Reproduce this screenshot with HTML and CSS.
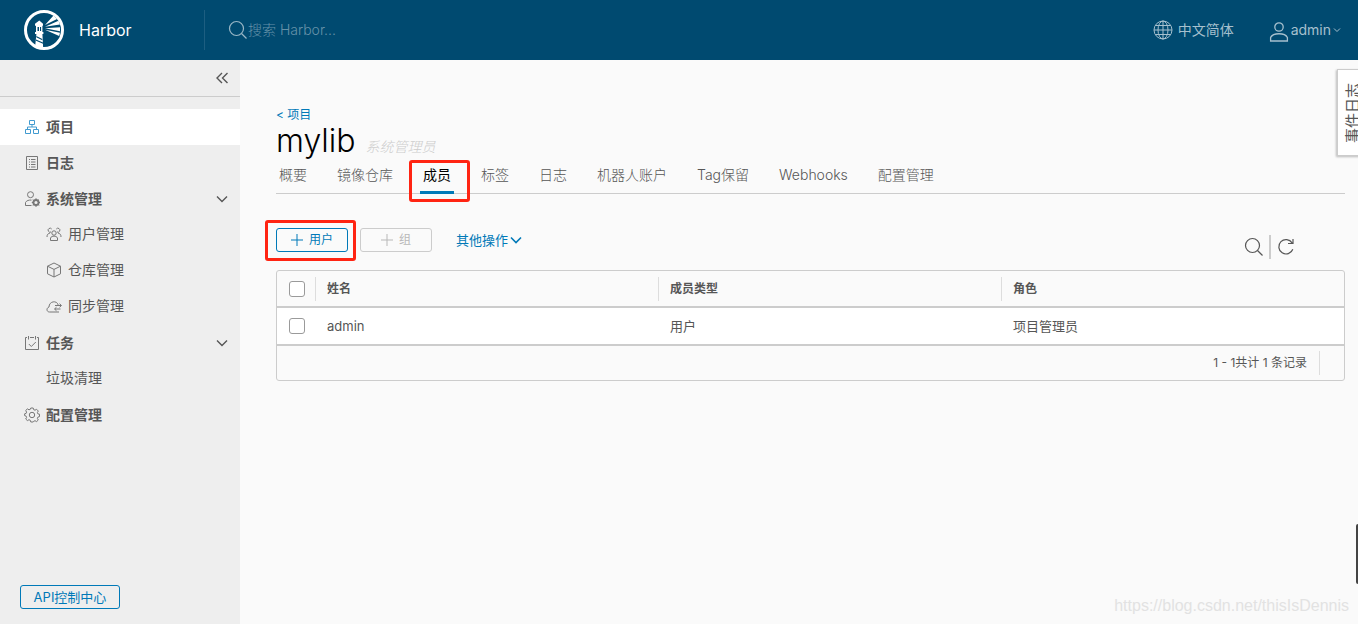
FILE: index.html
```html
<!DOCTYPE html>
<html lang="zh-CN">
<head>
<meta charset="utf-8">
<title>Harbor</title>
<link rel="stylesheet" href="styles.css">
</head>
<body>
<header class="header">
  <a class="brand" href="#">
    <svg class="logo" viewBox="0 0 40 40" aria-hidden="true">
      <circle cx="20" cy="20" r="18.500" fill="none" stroke="#fff" stroke-width="3"/>
      <path fill="#fff" d="M15.300 10.500l3.700 3.300v2h-.6V22h1v2h-1l.8 14.500c-3 .3-6-.7-8-2.500L12.400 24h-1.400v-2h1v-6.200h-1v-2z"/>
      <path fill="#004a70" d="M13.500 17h3.600v4h-3.600zM12.300 26l6 3v1.300l-6-3zM12 29.500l7 3v1.300l-7-3z"/>
      <path fill="#fff" d="M15 17h1v4h-1zM21 15l8.500-9.500 3.500 3.500zM21 16.800l13.500-6 1.500 3.700zM21 18.300l15-1v4zM21 19.800l15 3-.8 3.200z"/>
    </svg>
    <span>Harbor</span>
  </a>
  <label class="search">
    <svg viewBox="0 0 20 20" aria-hidden="true"><circle cx="8.500" cy="8.500" r="7"/><path d="M13.500 13.500l5 5"/></svg>
    <input type="search" placeholder="搜索 Harbor..." aria-label="搜索 Harbor">
  </label>
  <div class="header-actions">
    <button class="header-button" type="button">
      <svg class="globe" viewBox="0 0 20 20" aria-hidden="true"><circle cx="10" cy="10" r="9"/><ellipse cx="10" cy="10" rx="5" ry="9"/><path d="M10 1v18M1 10h18M2.500 5.500h15M2.500 14.500h15"/></svg>
      <span>中文简体</span>
    </button>
    <button class="header-button user" type="button">
      <svg class="person" viewBox="0 0 20 20" aria-hidden="true"><circle cx="10" cy="5" r="4.200"/><path d="M1.600 19v-3.500c2.500-5 14.300-5 16.800 0V19z"/></svg>
      <span>admin</span>
      <svg class="caret" viewBox="0 0 8 8" aria-hidden="true"><path d="M1 2.500l3 3 3-3"/></svg>
    </button>
  </div>
</header>
<div class="layout">
  <nav class="sidebar">
    <div class="collapse-row">
      <button class="collapse" type="button" aria-label="收起"><svg viewBox="0 0 14 14" aria-hidden="true"><path d="M7 2L2 7l5 5M12.500 2l-5 5 5 5"/></svg></button>
    </div>
    <ul class="menu">
      <li><a class="item active" href="#"><svg viewBox="0 0 16 16" aria-hidden="true"><path d="M5.500 1.500h5v4h-5zM1.500 10.500h5v4h-5zM9.500 10.500h5v4h-5zM8 5.500V8M3.500 10.500V8h9v2.500"/></svg><span>项目</span></a></li>
      <li><a class="item" href="#"><svg viewBox="0 0 16 16" aria-hidden="true"><path d="M2.500 1.500h11v13h-11zM5 4.500h1M7 4.500h4.500M5 7h1M7 7h4.500M5 9.500h1M7 9.500h4.500M5 12h1M7 12h4.500"/></svg><span>日志</span></a></li>
      <li><a class="item" href="#"><svg viewBox="0 0 16 16" aria-hidden="true"><circle cx="6.500" cy="3.700" r="3"/><path d="M7.500 14.500h-6v-3c1-2 3.500-2.700 6-2.400"/><circle cx="12" cy="11.500" r="2.600" stroke-width="2"/><path d="M12 7.200v2M12 14v2M7.800 11.500h2M14.200 11.500h2M9 8.500l1.400 1.400M15 8.500l-1.400 1.400M9 14.500l1.400-1.400M15 14.500l-1.400-1.400"/></svg><span>系统管理</span><svg class="chevron" viewBox="0 0 14 14" aria-hidden="true"><path d="M2 4.500l5 5 5-5"/></svg></a></li>
      <li><a class="item sub" href="#"><svg viewBox="0 0 16 16" aria-hidden="true"><circle cx="8" cy="7" r="2.200"/><path d="M4.500 14.500V12c1-2.500 6-2.500 7 0v2.500zM5 6a2 2 0 1 1 .7-3M11 6a2 2 0 1 0-.7-3M1 11c0-2.500 1-3.500 3-4M15 11c0-2.500-1-3.500-3-4"/></svg><span>用户管理</span></a></li>
      <li><a class="item sub" href="#"><svg viewBox="0 0 16 16" aria-hidden="true"><path d="M8 1l6.500 3.200v7.600L8 15l-6.500-3.200V4.200zM1.500 4.200L8 7.400l6.500-3.200M8 7.400V15"/></svg><span>仓库管理</span></a></li>
      <li><a class="item sub" href="#"><svg viewBox="0 0 16 16" aria-hidden="true"><path d="M13 14H3.500C.5 14 0 10 3 9c0-6 8-7 9.200-2M9 7.500h6M13.500 5.700l2 1.800-2 1.800M14.500 11H8.800M10.500 9.200L8.500 11l2 1.800"/></svg><span>同步管理</span></a></li>
      <li><a class="item" href="#"><svg viewBox="0 0 16 16" aria-hidden="true"><path d="M3 2.500H1.500v12h13v-12H13M6 2.500h4M4.500 1v3.500M11.500 1v3.500M4.800 9l2.500 2.500 4.500-4.500"/></svg><span>任务</span><svg class="chevron" viewBox="0 0 14 14" aria-hidden="true"><path d="M2 4.500l5 5 5-5"/></svg></a></li>
      <li><a class="item sub" href="#"><span>垃圾清理</span></a></li>
      <li><a class="item" href="#"><svg viewBox="0 0 16 16" aria-hidden="true"><circle cx="8" cy="8" r="2.700"/><path d="M6.800 1h2.400l.5 1.700 1.300.5 1.600-.9 1.700 1.700-.9 1.600.5 1.300 1.600.3v2.400l-1.600.5-.5 1.300.9 1.600-1.700 1.600-1.600-.9-1.300.6L9.200 15H6.800l-.5-1.700-1.300-.6-1.600.9L1.700 12l.9-1.600-.5-1.300-1.500-.5V6.800l1.500-.4.5-1.300-.9-1.600 1.700-1.600 1.600.9 1.300-.5z"/></svg><span>配置管理</span></a></li>
    </ul>
    <a class="button api" href="#">API控制中心</a>
  </nav>
  <main class="content">
    <a class="crumb" href="#">&lt; 项目</a>
    <div class="title"><h1>mylib</h1><em>系统管理员</em></div>
    <nav class="tabs">
      <a href="#">概要</a>
      <a href="#">镜像仓库</a>
      <a class="current" href="#">成员</a>
      <a href="#">标签</a>
      <a href="#">日志</a>
      <a href="#">机器人账户</a>
      <a href="#">Tag保留</a>
      <a href="#">Webhooks</a>
      <a href="#">配置管理</a>
    </nav>
    <div class="toolbar">
      <div class="marked"><button class="button" type="button"><svg viewBox="0 0 12 12" aria-hidden="true"><path d="M6 0v12M0 6h12"/></svg>用户</button></div>
      <button class="button" type="button" disabled><svg viewBox="0 0 12 12" aria-hidden="true"><path d="M6 0v12M0 6h12"/></svg>组</button>
      <button class="more" type="button">其他操作<svg viewBox="0 0 12 12" aria-hidden="true"><path d="M1 3.500l5 5 5-5"/></svg></button>
      <div class="tools">
        <button type="button" aria-label="搜索"><svg viewBox="0 0 20 20" aria-hidden="true"><circle cx="8.500" cy="8.500" r="7"/><path d="M13.500 13.500l5 5"/></svg></button>
        <button type="button" aria-label="刷新"><svg viewBox="0 0 20 20" aria-hidden="true"><path d="M16.800 12.200a7.200 7.200 0 1 1-.7-6.300M12 6.500h5V2"/></svg></button>
      </div>
    </div>
    <div class="grid">
      <table>
        <thead>
          <tr><th class="check"><input type="checkbox" aria-label="全选"></th><th><div>姓名</div></th><th><div>成员类型</div></th><th><div>角色</div></th></tr>
        </thead>
        <tbody>
          <tr><td class="check"><input type="checkbox" aria-label="选择 admin"></td><td>admin</td><td>用户</td><td>项目管理员</td></tr>
        </tbody>
      </table>
      <div class="grid-footer"><span>1 - 1共计 1 条记录</span></div>
    </div>
  </main>
</div>
<button class="event-log" type="button">事件日志</button>
<div class="edge-handle"></div>
<div class="watermark">https://blog.csdn.net/thisIsDennis</div>
<script src="app.js"></script>
</body>
</html>
```

FILE: app.js
```js
document.querySelector('thead input').addEventListener('change', function (e) {
  document.querySelectorAll('tbody input').forEach(function (box) {
    box.checked = e.target.checked;
  });
});
```

FILE: styles.css
```css
* { box-sizing: border-box; }

body {
  display: flex;
  flex-direction: column;
  min-height: 100vh;
  margin: 0;
  overflow: hidden;
  background: #fafafa;
  color: #565656;
  font: 400 14px/24px Inter, "Noto Sans CJK SC", sans-serif;
}

a { color: inherit; text-decoration: none; }
button, input { font: inherit; color: inherit; }
button { padding: 0; border: 0; background: none; }
svg { flex: none; fill: none; stroke: currentColor; }

.header {
  display: flex;
  align-items: center;
  height: 60px;
  background: #004a70;
  color: #fff;
}
.brand {
  display: flex;
  align-items: center;
  gap: 15px;
  width: 205px;
  height: 40px;
  padding-left: 24px;
  border-right: 1px solid #1d5e81;
  font-size: 16px;
}
.logo { width: 40px; height: 40px; stroke: none; }
.search {
  display: flex;
  flex: 1;
  align-items: center;
  padding-left: 23px;
  color: #99b7c6;
}
.search svg { width: 20px; height: 20px; stroke-width: 1.2; }
.search input {
  width: 240px;
  padding: 0;
  border: 0;
  outline: 0;
  background: none;
  font-weight: 300;
}
.search input::placeholder { color: #6692a9; }
.header-actions { display: flex; gap: 35px; padding-right: 17px; }
.header-button {
  display: flex;
  align-items: center;
  gap: 5px;
  color: #a6c0ce;
}
.user { gap: 2px; }
.header-button .globe, .header-button .person { width: 20px; height: 20px; }
.person { margin-top: 3px; stroke-width: 1.3; }
.caret { width: 8px; height: 8px; }

.layout { display: flex; flex: 1; }
.sidebar {
  display: flex;
  flex: none;
  flex-direction: column;
  width: 240px;
  padding-bottom: 15px;
  background: #eee;
}
.collapse-row {
  display: flex;
  align-items: center;
  justify-content: flex-end;
  height: 37px;
  padding-right: 11px;
  border-bottom: 1px solid #ccc;
}
.collapse, .collapse svg { display: block; width: 14px; height: 14px; }
.collapse svg { stroke-width: 1.4; }
.menu { margin: 0; padding: 12px 0 0; list-style: none; }
.item {
  display: flex;
  align-items: center;
  gap: 6px;
  height: 36px;
  padding: 0 11px 0 24px;
  font-weight: 600;
}
.item svg { width: 16px; height: 16px; color: #777; }
.item .chevron { width: 14px; height: 14px; margin-left: auto; color: #565656; stroke-width: 1.4; }
.active { background: #fff; }
.item.active svg { color: #429bd0; }
.sub { padding-left: 46px; padding-bottom: 2px; font-weight: 400; }

.button {
  display: inline-flex;
  align-items: center;
  justify-content: center;
  gap: 6px;
  width: 72px;
  height: 24px;
  border: 1px solid #0079b8;
  border-radius: 3px;
  color: #0079b8;
  font-size: 12px;
  line-height: 22px;
}
.button svg { width: 12px; height: 12px; }
.button:disabled { border-color: #ccc; color: #b8b8b8; }
.api { width: 100px; margin: auto 0 0 20px; font-size: 13px; }

.content { flex: 1; min-width: 0; padding: 46px 13px 0 36px; }
.crumb { display: block; color: #0079b8; font-size: 12px; line-height: 18px; }
.title {
  display: flex;
  align-items: baseline;
  gap: 10px;
  height: 36px;
}
.title h1 { margin: 0; color: #000; font-size: 32px; font-weight: 300; line-height: 34px; }
.title em { color: #ccc; font-weight: 300; }
.tabs {
  display: flex;
  gap: 24px;
  height: 34px;
  border-bottom: 1px solid #ccc;
  font-weight: 300;
  line-height: 30px;
}
.tabs a { position: relative; height: 34px; padding: 0 3px; white-space: nowrap; }
.tabs .current { border-bottom: 3px solid #0079b8; color: #000; font-weight: 400; }
.tabs .current::after, .marked::after {
  content: "";
  position: absolute;
  border: 3px solid #ff2412;
  border-radius: 3px;
  pointer-events: none;
}
.tabs .current::after { inset: 0 -16px -11px -11px; }

.toolbar {
  display: flex;
  align-items: flex-start;
  gap: 12px;
  height: 76px;
  padding-top: 34px;
}
.marked { position: relative; display: flex; }
.marked::after { inset: -8px -8px -9px -11px; }
.more {
  display: flex;
  align-items: center;
  gap: 2px;
  margin-left: 12px;
  color: #0079b8;
  font-size: 13px;
}
.more svg { width: 12px; height: 12px; stroke-width: 1.6; }
.tools { display: flex; margin: 7px 49px 0 auto; }
.tools button { display: flex; align-items: center; height: 24px; }
.tools button + button { margin-left: 5px; padding-left: 5px; border-left: 2px solid #ccc; }
.tools svg { width: 20px; height: 20px; stroke-width: 1.2; }

.grid { border: 1px solid #ccc; border-radius: 3px; }
table { width: 100%; table-layout: fixed; border-spacing: 0; text-align: left; }
th, td { height: 37px; padding: 0; }
th { border-bottom: 2px solid #ccc; font-size: 12px; font-weight: 600; }
th div { padding-left: 11px; border-left: 1px solid #ddd; }
td { height: 36px; padding-left: 12px; background: #fff; font-size: 13px; }
.check { width: 38px; padding: 0; text-align: center; }
input[type="checkbox"] {
  display: block;
  width: 16px;
  height: 16px;
  margin: 0 0 0 12px;
  border: 1px solid #9a9a9a;
  border-radius: 3px;
  appearance: none;
  background: #fff;
}
input[type="checkbox"]:checked { background: #0079b8; }
.grid-footer {
  display: flex;
  align-items: center;
  justify-content: flex-end;
  height: 36px;
  padding-right: 24px;
  border-top: 2px solid #ccc;
  font-size: 12px;
}
.grid-footer span { padding-right: 12px; border-right: 1px solid #ddd; }

.event-log {
  position: absolute;
  top: 69px;
  right: -10px;
  width: 31px;
  height: 87px;
  border: 1px solid #ccc;
  background: #fff;
  box-shadow: 1px -1px 2px #bbb;
  font-size: 15px;
  writing-mode: vertical-rl;
  text-orientation: sideways;
  transform: rotate(180deg);
}
.edge-handle {
  position: absolute;
  top: 524px;
  right: 0;
  width: 2px;
  height: 60px;
  border-radius: 2px 0 0 2px;
  background: #444;
}
.watermark {
  position: absolute;
  right: 9px;
  bottom: 6px;
  color: #e2e2e2;
  font: 16px/24px "Liberation Sans", sans-serif;
}
```
